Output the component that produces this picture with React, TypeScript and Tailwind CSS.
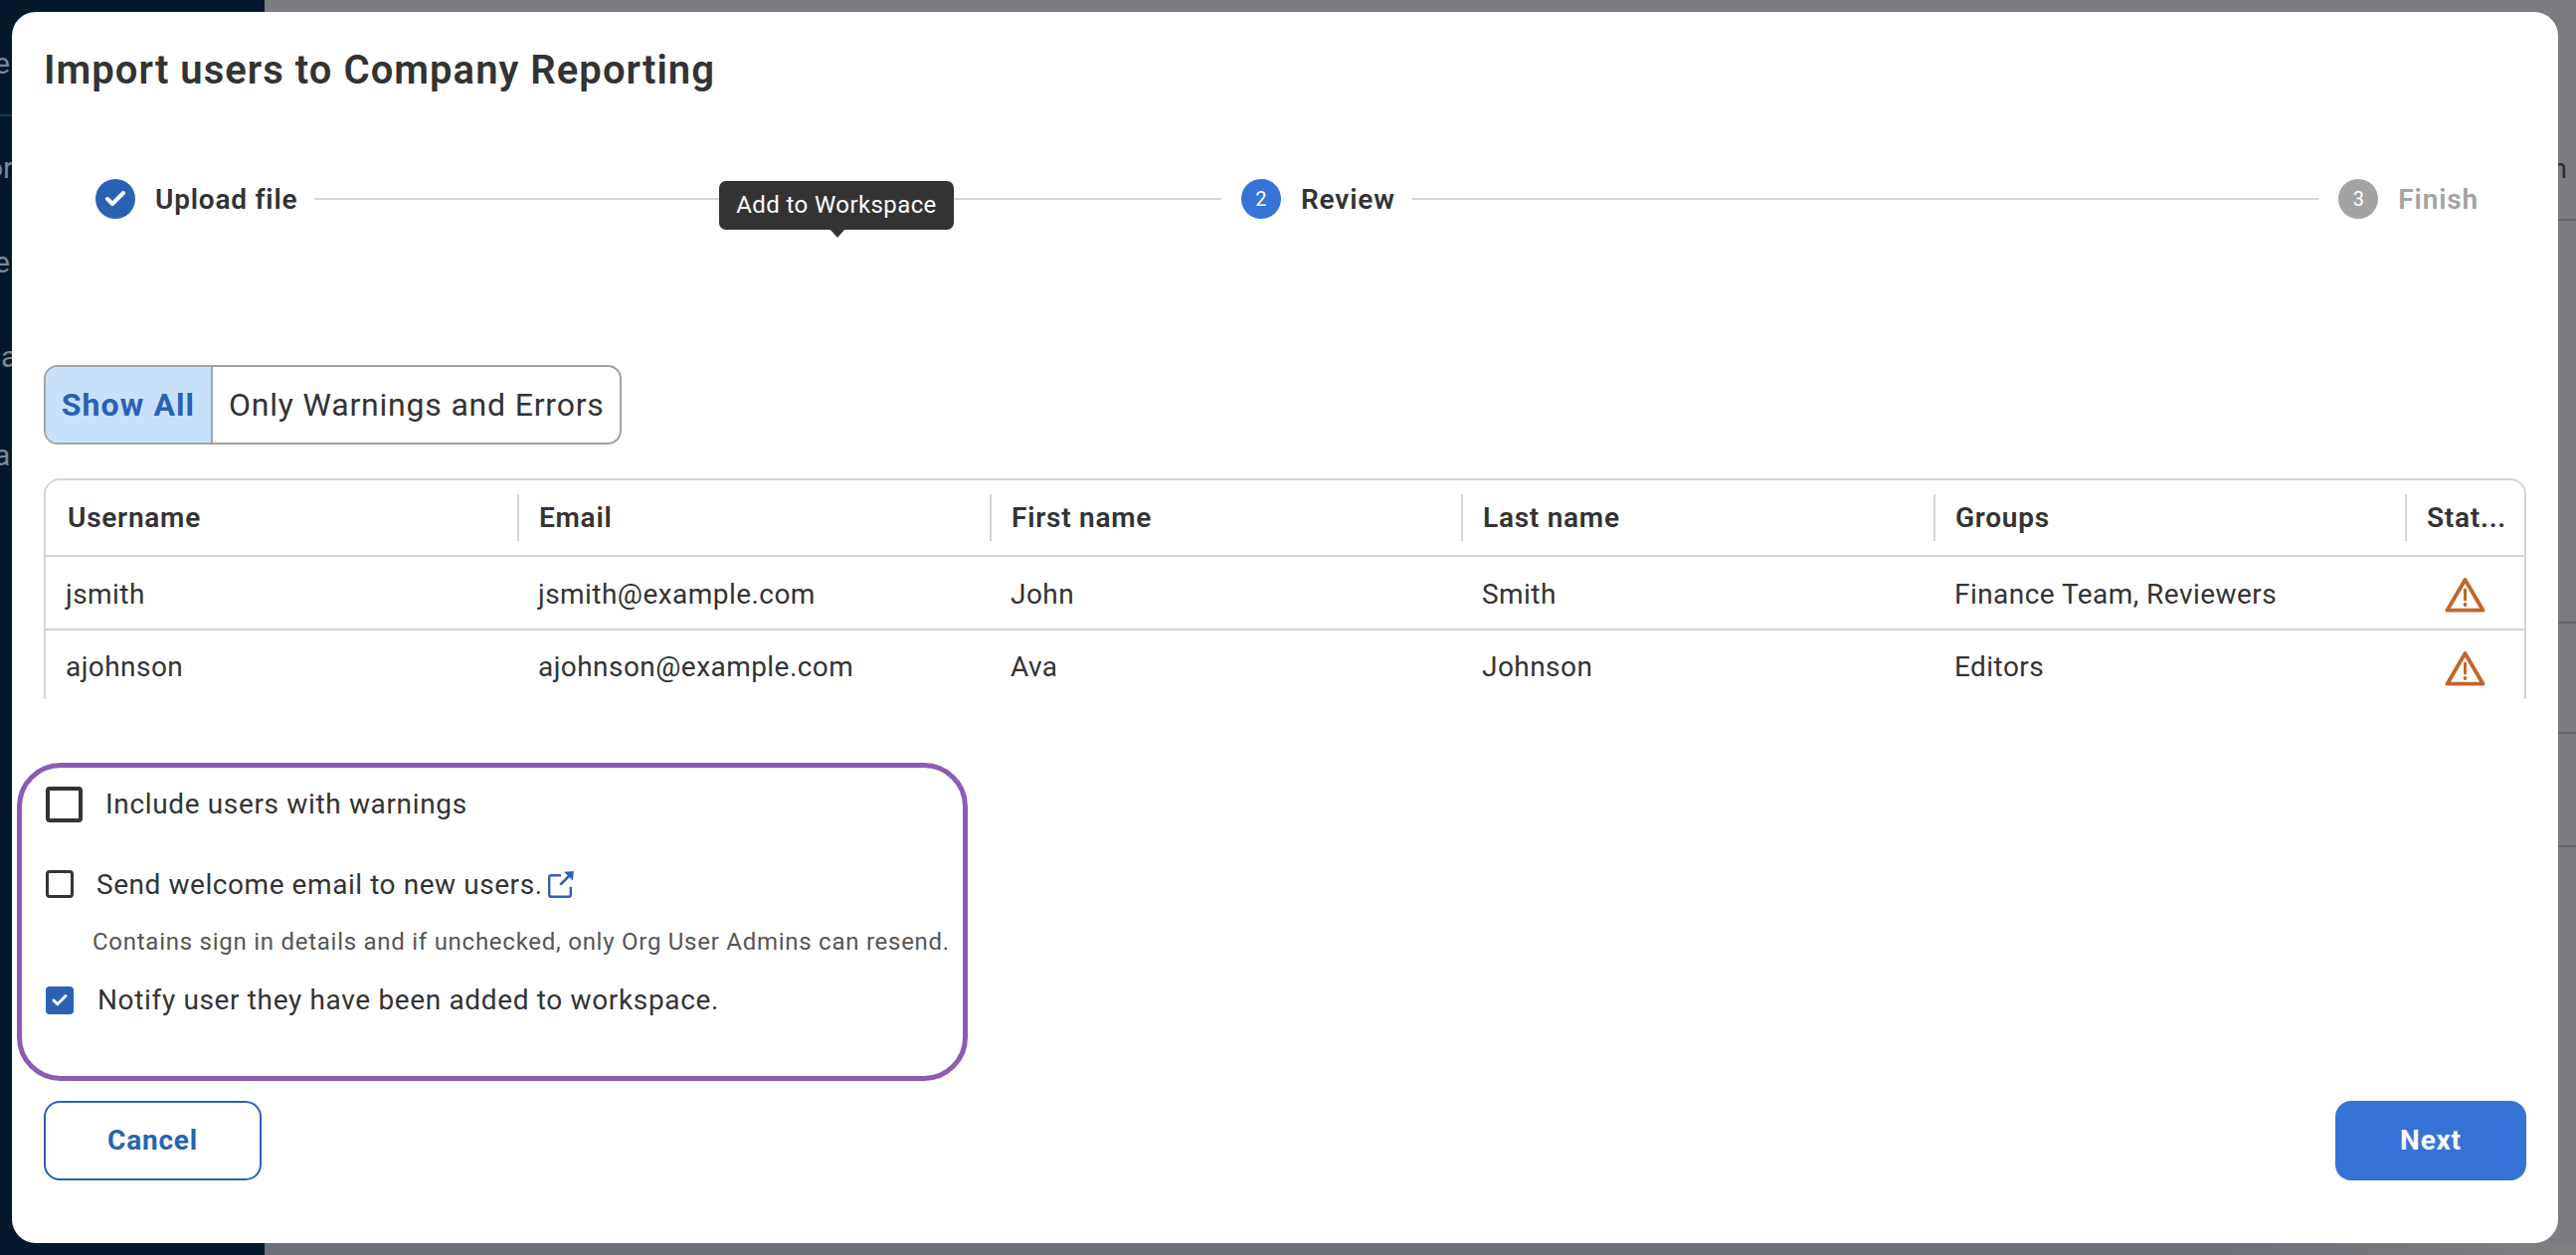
import { Check } from 'lucide-react';

const columns = ['Username', 'Email', 'First name', 'Last name', 'Groups', 'Stat...'];

const rows = [
  ['jsmith', 'jsmith@example.com', 'John', 'Smith', 'Finance Team, Reviewers'],
  ['ajohnson', 'ajohnson@example.com', 'Ava', 'Johnson', 'Editors'],
];

function WarningIcon() {
  return (
    <svg width="41" height="36" viewBox="0 0 41 36" fill="none" className="block">
      <path d="M20.5 3 L2.5 33.7 H38.5 Z" stroke="#c1652b" strokeWidth="3.8" strokeLinejoin="round" />
      <path d="M20.5 13 V23" stroke="#c1652b" strokeWidth="3" strokeLinecap="round" />
      <circle cx="20.5" cy="28" r="1.9" fill="#c1652b" />
    </svg>
  );
}

function ExternalIcon() {
  return (
    <svg width="26" height="27" viewBox="0 0 26 27" fill="none" className="block">
      <path d="M13 4.2 H3.2 Q1.2 4.2 1.2 6.2 V23.8 Q1.2 25.8 3.2 25.8 H20.8 Q22.8 25.8 22.8 23.8 V15.7" stroke="#2962b5" strokeWidth="2.4" />
      <path d="M12.3 13.7 L21 5" stroke="#2962b5" strokeWidth="2.6" />
      <path d="M16 0.8 L25.8 0 L25 9.5 Z" fill="#2962b5" />
    </svg>
  );
}

function StepLabel({ n, label, tone }: { n: string; label: string; tone: string }) {
  return (
    <div className="flex items-center gap-5 shrink-0">
      <div className={`w-10 h-10 rounded-full flex items-center justify-center text-white text-[20px] ${tone === 'gray' ? 'bg-[#a3a3a3]' : 'bg-[#3574d6]'}`}>
        {n}
      </div>
      <span className={`pt-[2px] text-[28px] font-semibold tracking-[0.85px] ${tone === 'gray' ? 'text-[#a3a3a3]' : 'text-[#333333]'}`}>{label}</span>
    </div>
  );
}

export default function App() {
  return (
    <div className="relative w-[2590px] h-[1262px] overflow-hidden flex bg-[#7b7c80] font-['Roboto',sans-serif]">
      <div className="w-[266px] bg-[#05182b] text-[#7d8896] text-[30px] leading-none overflow-hidden flex flex-col">
        <div className="pt-[49px] -ml-[6px]">e</div>
        <div className="mt-[36px] h-[2px] bg-[#17345c]" />
        <div className="mt-[37px] -ml-[14px]">or</div>
        <div className="mt-[65px] -ml-[6px]">e</div>
        <div className="mt-[65px] -ml-[16px]">da</div>
        <div className="mt-[69px] -ml-[6px]">a</div>
      </div>

      <div className="flex-1 flex flex-col">
        <div className="h-[222px] border-b-2 border-[#63656a] flex items-start justify-end pt-[156px] pr-[9px] text-[28px] leading-none text-[#2c2f33]">n</div>
        <div className="h-[405px] border-b-2 border-[#63656a]" />
        <div className="h-[111px] border-b-2 border-[#63656a]" />
        <div className="h-[114px] border-b-2 border-[#63656a]" />
        <div className="flex-1" />
        <div className="h-3 bg-gradient-to-r from-[#6d7079] from-85% to-[#808082]" />
      </div>

      {/* modal */}
      <div className="absolute left-3 top-3 w-[2560px] h-[1238px] bg-white rounded-[24px] flex flex-col px-8 text-[#333333]">
        <h1 className="mt-[39px] text-[40px] leading-[40px] font-semibold tracking-[1.03px]">Import users to Company Reporting</h1>

        <div className="relative mt-[89px] ml-[52px] mr-[48px] flex items-center gap-[17px] h-10">
          <div className="flex items-center gap-5 shrink-0">
            <div className="w-10 h-10 rounded-full bg-[#2962b5] flex items-center justify-center">
              <Check size={24} strokeWidth={4} color="#ffffff" />
            </div>
            <span className="pt-[2px] text-[28px] font-semibold tracking-[0.8px]">Upload file</span>
          </div>
          <div className="flex-1 h-[2px] mr-[3px] bg-[#d4d4d4]" />
          <StepLabel n="2" label="Review" tone="blue" />
          <div className="flex-1 h-[2px] mr-[3px] bg-[#d4d4d4]" />
          <StepLabel n="3" label="Finish" tone="gray" />

          <div className="absolute left-[627px] top-[2px] w-[236px] h-[49px] pb-[2px] rounded-[7px] bg-[#333333] text-white text-[24px] tracking-[0.4px] flex items-center justify-center">
            Add to Workspace
            <div className="absolute left-[111px] top-[48px] w-0 h-0 border-l-[8px] border-r-[8px] border-t-[9px] border-l-transparent border-r-transparent border-t-[#333333]" />
          </div>
        </div>

        <div className="mt-[147px] flex w-[581px] h-[80px] border-2 border-[#a3a3a3] rounded-[14px] overflow-hidden text-[32px]">
          <div className="w-[168px] bg-[#c8e1fb] text-[#2962b5] font-bold tracking-[1.1px] flex items-center justify-center border-r-2 border-[#a3a3a3]">Show All</div>
          <div className="flex-1 flex items-center pl-[16px] tracking-[0.8px]">Only Warnings and Errors</div>
        </div>

        <div className="mt-[34px] h-[222px] border-2 border-b-0 border-[#d4d4d4] rounded-t-[16px] overflow-hidden">
          <div className="grid grid-cols-[474px_475px_474px_475px_474px_1fr] h-[77px] border-b-2 border-[#d4d4d4] items-center">
            {columns.map((col, i) => (
              <div key={col} className={`h-[47px] flex items-center text-[28px] font-semibold tracking-[0.75px] whitespace-nowrap ${i > 0 ? 'pl-[20px] border-l-2 border-[#d4d4d4]' : 'pl-[22px]'}`}>
                {col}
              </div>
            ))}
          </div>
          <div className="grid grid-cols-[475px_475px_474px_475px_474px_1fr] h-[74px] pt-[3px] border-b-2 border-[#d4d4d4] items-center text-[28px] tracking-[0.45px]">
            {rows[0].map((cell) => (
              <div key={cell} className="pl-[20px]">{cell}</div>
            ))}
            <div className="pl-[39px] pt-[1px]"><WarningIcon /></div>
          </div>
          <div className="grid grid-cols-[475px_475px_474px_475px_474px_1fr] h-[74px] items-center text-[28px] tracking-[0.45px]">
            {rows[1].map((cell) => (
              <div key={cell} className="pl-[20px]">{cell}</div>
            ))}
            <div className="pl-[39px] pt-[2px]"><WarningIcon /></div>
          </div>
        </div>

        <div className="flex flex-col mt-[88px] ml-[2px]">
          <label className="flex items-center h-[36px] gap-[23px]">
            <span className="w-[37px] h-[36px] border-4 border-[#333333] rounded-[4px]" />
            <span className="text-[28px] tracking-[0.65px]">Include users with warnings</span>
          </label>
          <label className="flex items-center h-[28px] mt-[48px] gap-[23px]">
            <span className="w-[28px] h-[28px] border-[3px] border-[#333333] rounded-[4px]" />
            <span className="pt-[2px] text-[28px] tracking-[0.56px]">Send welcome email to new users.</span>
            <span className="-ml-[18px]"><ExternalIcon /></span>
          </label>
          <p className="mt-[28px] ml-[47px] text-[24px] leading-[32px] tracking-[0.74px] text-[#555555] whitespace-nowrap">Contains sign in details and if unchecked, only Org User Admins can resend.</p>
          <label className="flex items-center h-[28px] mt-[29px] gap-[24px]">
            <span className="w-[28px] h-[28px] bg-[#2962b5] rounded-[4px] flex items-center justify-center">
              <Check size={18} strokeWidth={4} color="#ffffff" />
            </span>
            <span className="text-[28px] tracking-[0.65px]">Notify user they have been added to workspace.</span>
          </label>
        </div>

        <div className="mt-[87px] flex justify-between items-start">
          <button className="w-[219px] h-[80px] border-2 border-[#2962b5] rounded-[16px] text-[#2962b5] text-[28px] font-bold tracking-[0.8px]">Cancel</button>
          <button className="w-[192px] h-[80px] bg-[#3574d6] rounded-[16px] text-white text-[28px] font-bold tracking-[0.8px]">Next</button>
        </div>

        {/* annotation ring */}
        <div className="absolute left-[5px] top-[755px] w-[956px] h-[320px] border-[5px] border-[#8a5cb5] rounded-[44px] pointer-events-none" />
      </div>
    </div>
  );
}
